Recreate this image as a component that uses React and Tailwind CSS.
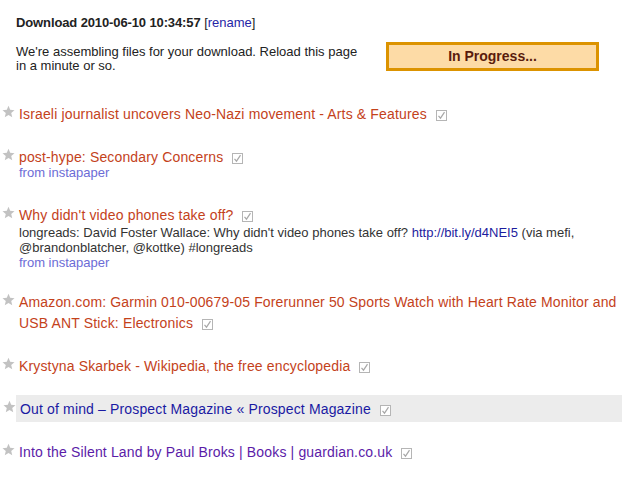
const items = [
  { title: 'Israeli journalist uncovers Neo-Nazi movement - Arts & Features', color: 'text-[#c4421b]' },
  {
    title: 'post-hype: Secondary Concerns',
    color: 'text-[#c4421b]',
    source: true,
    subClass: '-mt-[3px] mb-[3px]',
  },
  {
    title: "Why didn't video phones take off?",
    color: 'text-[#c4421b]',
    desc: true,
    source: true,
    subClass: '-mt-[1px]',
  },
  {
    title: 'Amazon.com: Garmin 010-00679-05 Forerunner 50 Sports Watch with Heart Rate Monitor and USB ANT Stick: Electronics',
    color: 'text-[#c4421b]',
  },
  { title: 'Krystyna Skarbek - Wikipedia, the free encyclopedia', color: 'text-[#c4421b]' },
  { title: 'Out of mind – Prospect Magazine « Prospect Magazine', color: 'text-[#1a1aa3]', active: true },
  { title: 'Into the Silent Land by Paul Broks | Books | guardian.co.uk', color: 'text-[#5b1ca8]' },
]

function Star() {
  return (
    <svg width="13" height="13" viewBox="0 0 24 24" className="mt-[1px] ml-[1px]">
      <path d="M12 1.5l3.1 7.4 8 .6-6.1 5.2 1.9 7.8L12 18.3l-6.9 4.2 1.9-7.8L.9 9.5l8-.6z" fill="#c2c2c2" />
    </svg>
  )
}

function Check() {
  return (
    <svg width="11" height="11" viewBox="0 0 11 11" className="inline ml-[9px]">
      <rect x="0.5" y="0.5" width="10" height="10" fill="#fff" stroke="#b5b5b5" />
      <path d="M2.5 5.8l2 2.4 4-6" fill="none" stroke="#a8a8a8" strokeWidth="1.2" />
    </svg>
  )
}

export default function App() {
  return (
    <div className="min-h-screen bg-white pl-[16px] pr-[11px] pt-[15px] text-[13px] text-[#222] font-['Liberation_Sans',Arial,sans-serif]">
      <div className="leading-[15px]">
        <span className="font-bold tracking-[-0.12px]">Download 2010-06-10 10:34:57</span>{' '}
        [<a className="text-[#2525a6]">rename</a>]
      </div>

      <div className="flex items-start mt-[12px]">
        <p className="w-[345px] mt-[3px] leading-[14px]">
          We're assembling files for your download. Reload this page in a minute or so.
        </p>
        <div className="ml-[25px] w-[213px] h-[29px] border-[3px] border-[#dc9300] bg-[#fddba6] flex items-center justify-center font-bold text-[14px] text-[#5a1b0d]">
          In Progress...
        </div>
      </div>

      <ul className="mt-[27px] flex flex-col gap-[16px]">
        {items.map((it) => (
          <li
            key={it.title}
            className={`flex pt-[4px] pb-[2px] ${it.active ? 'bg-[#ececec] pl-[4px]' : 'pl-[3px]'}`}
          >
            <div className="w-[18px] -ml-[18px] shrink-0">
              <Star />
            </div>
            <div className="flex-1 min-w-0">
              <div className={`text-[14px] tracking-[0.15px] leading-[21px] ${it.color}`}>
                {it.title}
                <Check />
              </div>
              {(it.desc || it.source) && (
                <div className={`leading-[15px] ${it.subClass}`}>
                  {it.desc && (
                    <div className="text-[#333]">
                      longreads: David Foster Wallace: Why didn't video phones take off?{' '}
                      <a className="text-[#1c1c9e]">http://bit.ly/d4NEI5</a> (via mefi, @brandonblatcher, @kottke) #longreads
                    </div>
                  )}
                  {it.source && <div className="text-[#6c6cd6]">from instapaper</div>}
                </div>
              )}
            </div>
          </li>
        ))}
      </ul>
    </div>
  )
}
